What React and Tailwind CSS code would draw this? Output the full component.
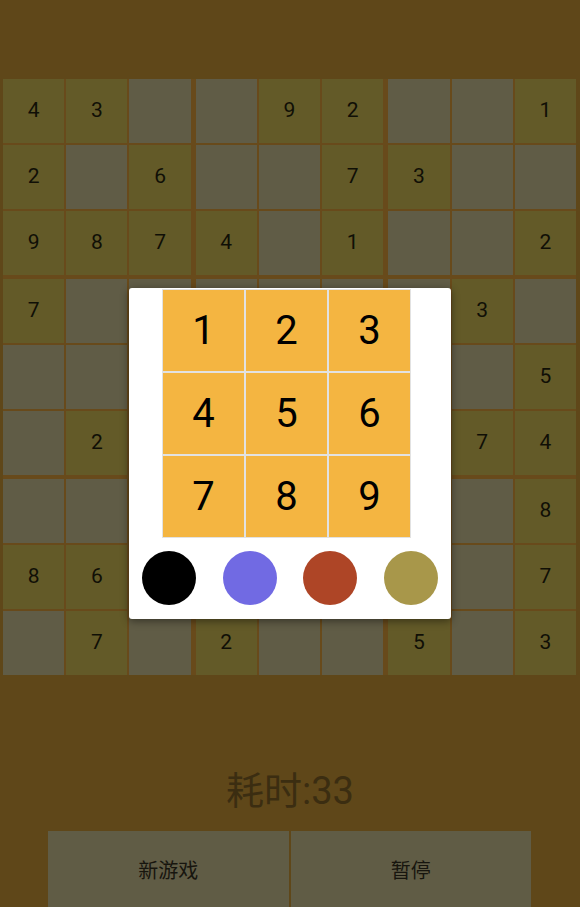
import React from 'react';

// 0 = empty cell; cells under the picker are left blank
const board = [
  [4, 3, 0, 0, 9, 2, 0, 0, 1],
  [2, 0, 6, 0, 0, 7, 3, 0, 0],
  [9, 8, 7, 4, 0, 1, 0, 0, 2],
  [7, 0, 0, 0, 0, 0, 0, 3, 0],
  [0, 0, 0, 0, 0, 0, 0, 0, 5],
  [0, 2, 0, 0, 0, 0, 0, 7, 4],
  [0, 0, 0, 0, 0, 0, 0, 0, 8],
  [8, 6, 0, 0, 0, 0, 0, 0, 7],
  [0, 7, 0, 2, 0, 0, 5, 0, 3],
];

const colors = ['bg-black', 'bg-[#716ae3]', 'bg-[#ae4526]', 'bg-[#a8974a]'];

function Cell({ value, extraLeft }) {
  return (
    <div
      className={`flex-1 h-[64px] flex items-center justify-center text-[21px] text-[#100f06] ${
        value ? 'bg-[#635a28]' : 'bg-[#605c46]'
      } ${extraLeft ? 'ml-[3px]' : ''}`}
    >
      {value || ''}
    </div>
  );
}

function NumberPicker() {
  return (
    <div className="absolute left-[129px] top-[288px] w-[322px] h-[331px] bg-white rounded-[3px] shadow-[0_2px_8px_rgba(0,0,0,0.45)]">
      <div className="ml-[33px] mt-[1px] w-[249px] grid grid-cols-3">
        {[1, 2, 3, 4, 5, 6, 7, 8, 9].map((n) => (
          <div
            key={n}
            className="h-[83px] border border-[#e2e2e2] bg-[#f4b541] flex items-center justify-center text-[40px] text-black"
          >
            {n}
          </div>
        ))}
      </div>
      <div className="flex mt-[13px]">
        {colors.map((c) => (
          <div key={c} className="flex-1 flex justify-center">
            <div className={`w-[54px] h-[54px] rounded-full ${c}`} />
          </div>
        ))}
      </div>
    </div>
  );
}

export default function App() {
  return (
    <div className="relative w-[580px] h-[907px] overflow-hidden bg-[#5f4719] font-['Roboto','Noto_Sans_CJK_SC',sans-serif]">
      <div className="h-[79px]" />

      {/* Board */}
      <div className="ml-[3px] mr-[4px] bg-[#684a1b] flex flex-col gap-[2px]">
        {board.map((row, r) => (
          <div
            key={r}
            className={`flex gap-[2px] ${r === 3 || r === 6 ? 'mt-[2px]' : ''}`}
          >
            {row.map((v, c) => (
              <Cell key={c} value={v} extraLeft={c === 3 || c === 6} />
            ))}
          </div>
        ))}
      </div>

      {/* Timer */}
      <div className="mt-[94px] text-center text-[38px] leading-[44px] text-[#3b2d11]">
        耗时:33
      </div>

      {/* Buttons */}
      <div className="mt-[18px] ml-[48px] w-[483px] flex gap-[2px]">
        <button className="flex-1 h-[80px] bg-[#605c45] text-[20px] text-[#17150e]">
          新游戏
        </button>
        <button className="flex-1 h-[80px] bg-[#605c45] text-[20px] text-[#17150e]">
          暂停
        </button>
      </div>

      <NumberPicker />
    </div>
  );
}
